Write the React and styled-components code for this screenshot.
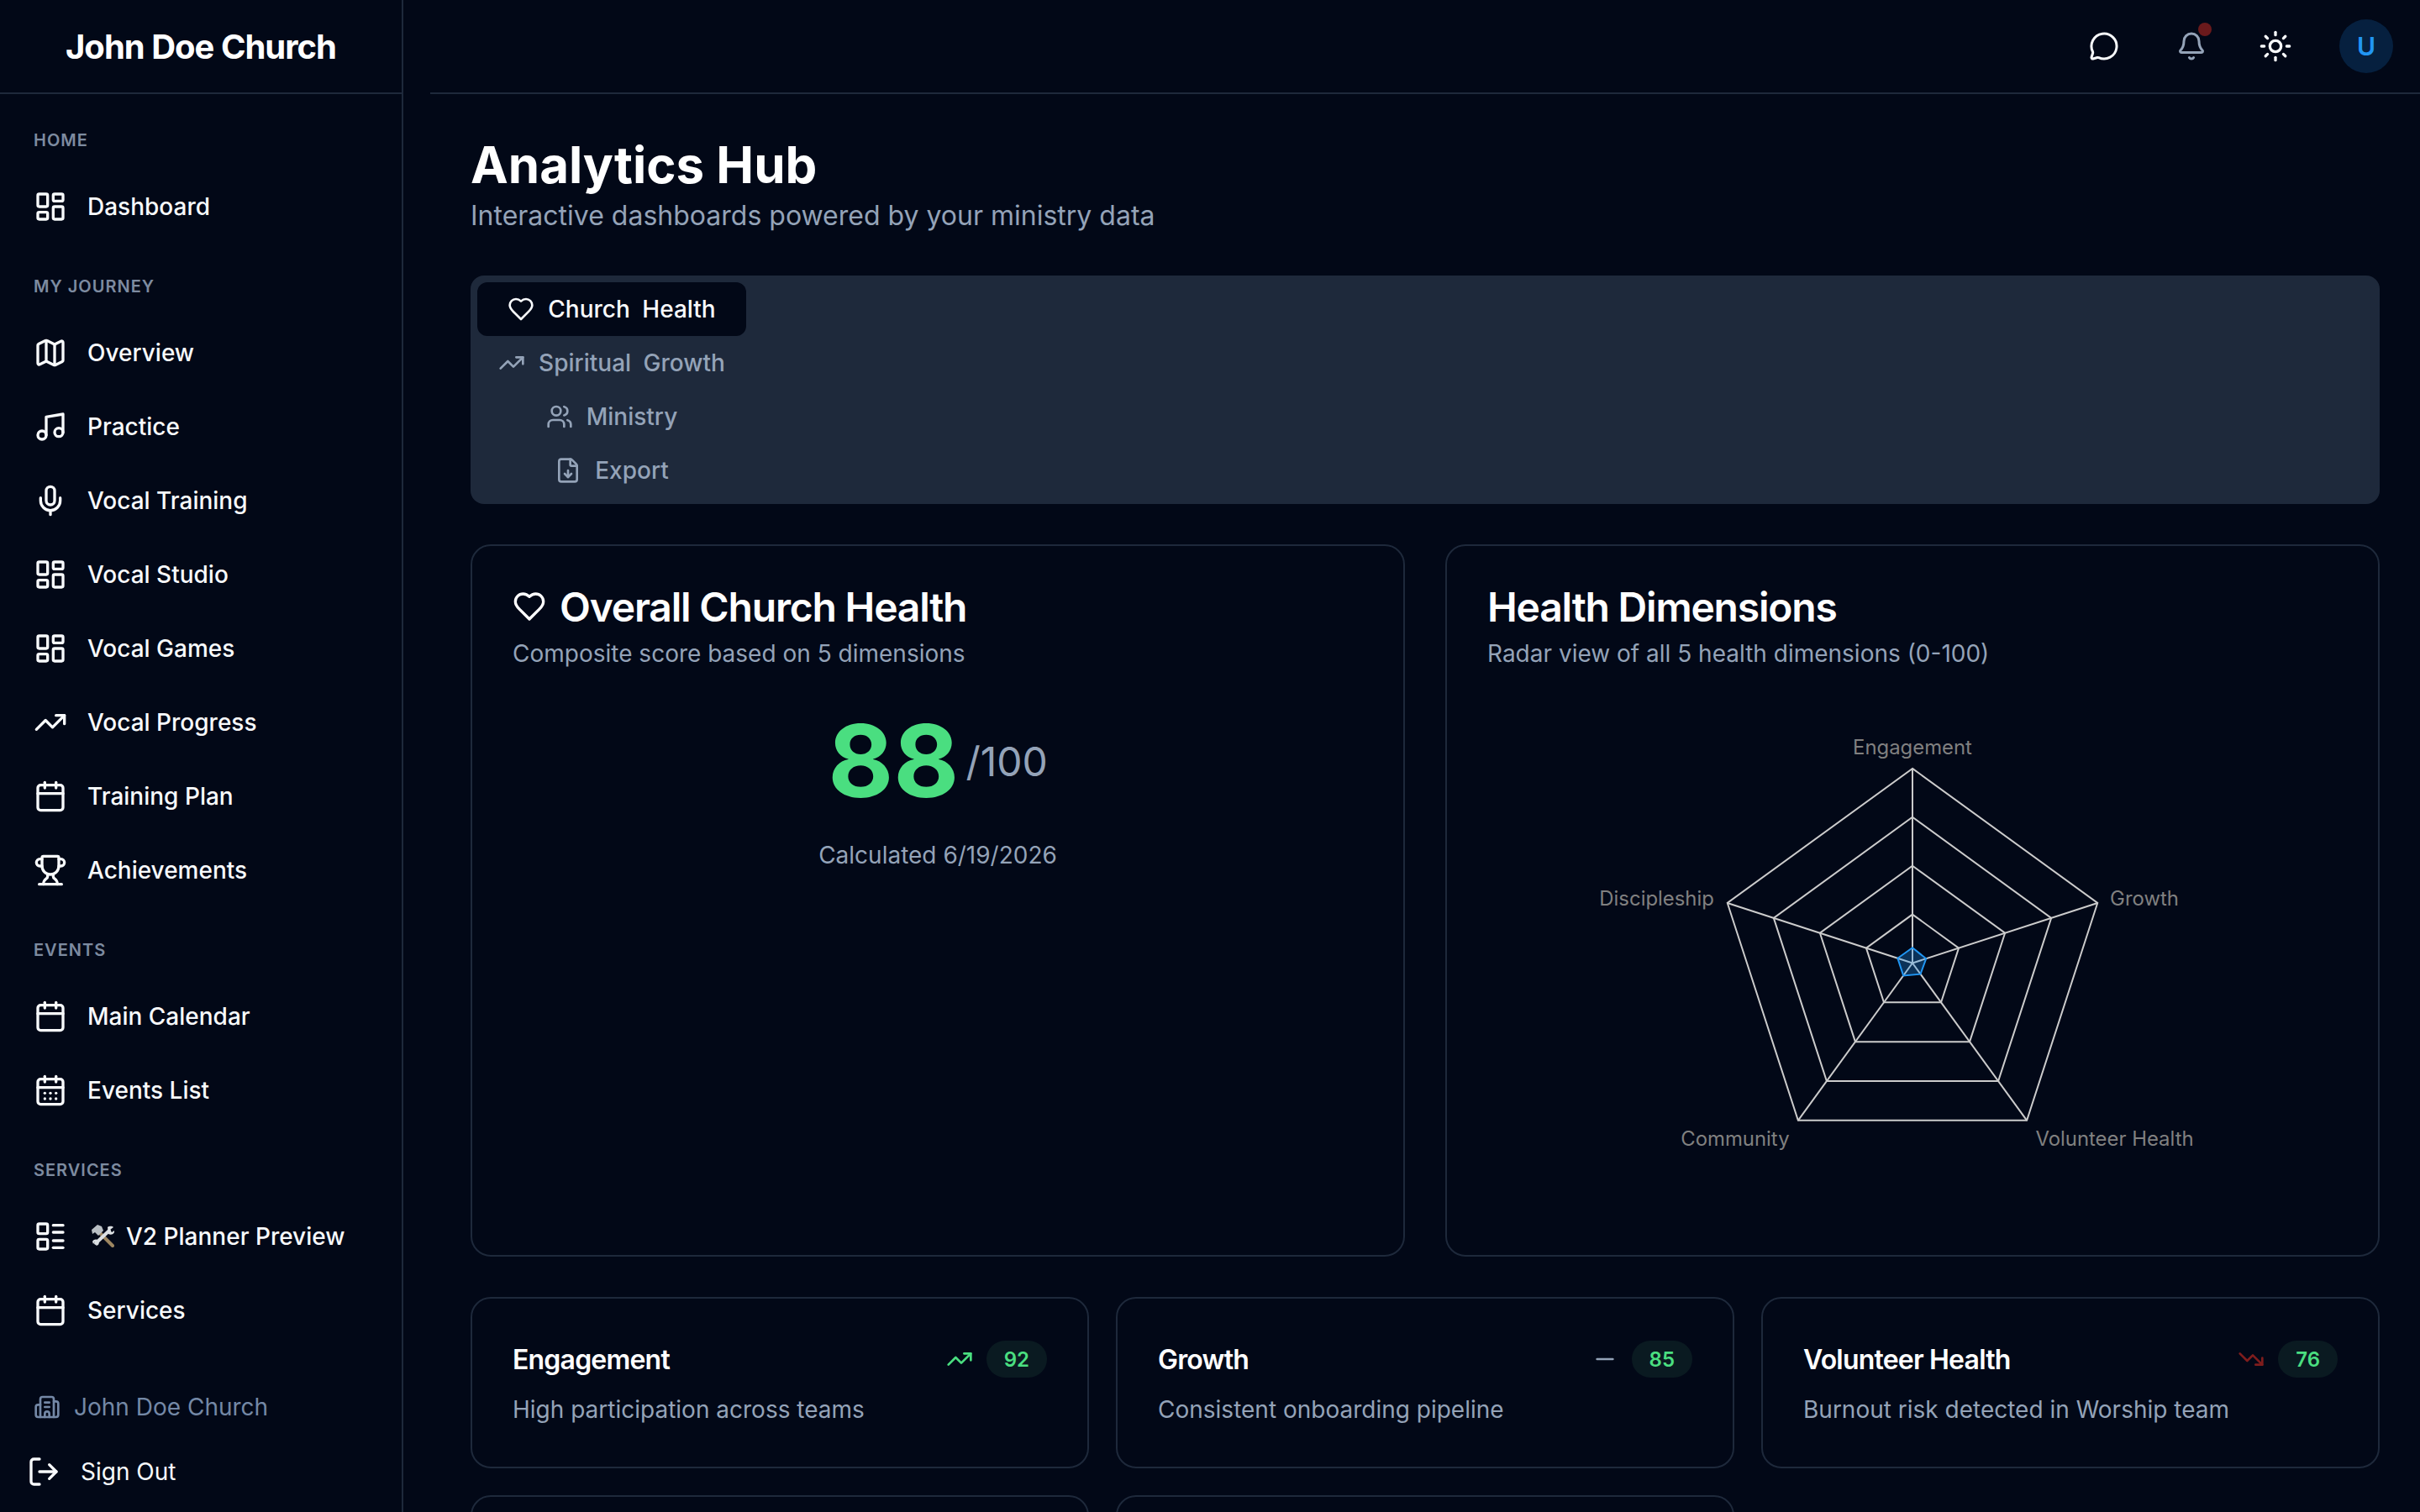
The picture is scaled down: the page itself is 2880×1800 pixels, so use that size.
import React from "react";
import styled, { createGlobalStyle } from "styled-components";
import {
  Bell,
  Building2,
  Calendar,
  CalendarDays,
  FileDown,
  LayoutDashboard,
  LayoutList,
  LogOut,
  Map,
  MessageCircle,
  Mic,
  Minus,
  Music,
  Sun,
  TrendingDown,
  TrendingUp,
  Trophy,
  Users,
} from "lucide-react";

const GlobalStyle = createGlobalStyle`
  html, body {
    margin: 0;
    height: 100%;
    overflow: hidden;
    background: #020817;
  }
  body {
    font-family: Inter, "Liberation Sans", sans-serif;
    color: #f8fafc;
  }
  * {
    box-sizing: border-box;
  }
`;

const Shell = styled.div`
  display: flex;
  width: 2880px;
  height: 1800px;
  overflow: hidden;
  background: #020817;
`;

const Sidebar = styled.aside`
  flex: 0 0 480px;
  height: 100%;
  display: flex;
  flex-direction: column;
  border-right: 2px solid #1e293b;
`;

const Brand = styled.div`
  height: 112px;
  flex: none;
  display: flex;
  align-items: center;
  justify-content: center;
  border-bottom: 2px solid #1e293b;
  font-size: 40px;
  font-weight: 700;
  letter-spacing: -1px;
  color: #ffffff;
`;

const Nav = styled.nav`
  display: flex;
  flex-direction: column;
  gap: 34px;
  padding-top: 38px;
`;

const NavSection = styled.div`
  display: flex;
  flex-direction: column;
`;

const SectionLabel = styled.div`
  height: 32px;
  margin-bottom: 20px;
  padding: 2px 0 0 40px;
  display: flex;
  align-items: center;
  font-size: 20px;
  font-weight: 600;
  letter-spacing: 1px;
  text-transform: uppercase;
  color: #7d8ba0;
`;

const NavItem = styled.a`
  height: 88px;
  padding-left: 40px;
  display: flex;
  align-items: center;
  gap: 24px;
  font-size: 28px;
  font-weight: 500;
  color: #f8fafc;
`;

const ToolEmoji = styled.svg`
  flex: none;
  width: 32px;
  height: 32px;
  margin-right: -10px;
`;

const SidebarFooter = styled.div`
  margin-top: auto;
  display: flex;
  flex-direction: column;
  padding-bottom: 12px;
`;

const ChurchName = styled.div`
  height: 60px;
  padding-left: 40px;
  display: flex;
  align-items: center;
  gap: 16px;
  font-size: 28px;
  color: #7488a6;
`;

const SignOut = styled.a`
  height: 72px;
  margin-top: 11px;
  padding-left: 32px;
  display: flex;
  align-items: center;
  gap: 24px;
  font-size: 28px;
  color: #f8fafc;
`;

const Main = styled.div`
  flex: 1;
  min-width: 0;
  margin-left: 32px;
  display: flex;
  flex-direction: column;
  overflow: hidden;
`;

const TopBar = styled.header`
  height: 112px;
  flex: none;
  padding-right: 32px;
  display: flex;
  align-items: center;
  justify-content: flex-end;
  gap: 32px;
  border-bottom: 2px solid #1e293b;
`;

const IconButton = styled.button`
  position: relative;
  width: ${({ $width }) => $width}px;
  height: 72px;
  padding: 0;
  display: flex;
  align-items: center;
  justify-content: center;
  border: 0;
  background: none;
  color: ${({ $color }) => $color};
`;

const NotificationDot = styled.span`
  position: absolute;
  top: 8px;
  left: 44px;
  width: 16px;
  height: 16px;
  border-radius: 50%;
  background: #6b1a1c;
`;

const Avatar = styled.div`
  width: 64px;
  height: 64px;
  margin-left: 12px;
  display: flex;
  align-items: center;
  justify-content: center;
  border-radius: 50%;
  background: #06203f;
  font-size: 30px;
  font-weight: 600;
  color: #2196f3;
`;

const Content = styled.main`
  flex: 1;
  padding: 48px 48px 0;
  display: flex;
  flex-direction: column;
  gap: 48px;
`;

const PageHeading = styled.div`
  margin-bottom: -2px;
`;

const PageTitle = styled.h1`
  margin: 0;
  font-size: 60px;
  line-height: 72px;
  font-weight: 700;
  color: #ffffff;
`;

const PageSubtitle = styled.p`
  margin: 0;
  font-size: 32px;
  line-height: 50px;
  color: #94a3b8;
`;

const TabList = styled.div`
  padding: 8px;
  display: flex;
  flex-direction: column;
  align-items: flex-start;
  border-radius: 16px;
  background: #1e293b;
`;

const Tab = styled.button`
  width: 320px;
  height: 64px;
  padding: 0;
  display: flex;
  align-items: center;
  justify-content: center;
  gap: 16px;
  border: 0;
  border-radius: 12px;
  background: ${({ $active }) => ($active ? "#020817" : "transparent")};
  font: 500 28px Inter, sans-serif;
  word-spacing: 7px;
  color: ${({ $active }) => ($active ? "#f8fafc" : "#94a3b8")};
`;

const CardGrid = styled.div`
  display: grid;
  grid-template-columns: 1fr 1fr;
  gap: 48px;
`;

const Card = styled.section`
  height: 848px;
  padding: 48px;
  display: flex;
  flex-direction: column;
  border: 2px solid #1e293b;
  border-radius: 24px;
`;

const CardTitle = styled.h2`
  margin: 0;
  height: 48px;
  display: flex;
  align-items: center;
  gap: 16px;
  font-size: 48px;
  font-weight: 600;
  letter-spacing: -1.2px;
  color: #ffffff;
`;

const CardDescription = styled.p`
  margin: 12px 0 48px;
  font-size: 28px;
  line-height: 40px;
  color: #94a3b8;
`;

const ScoreRow = styled.div`
  height: 120px;
  display: flex;
  align-items: center;
  justify-content: center;
  gap: 8px;
`;

const ScoreValue = styled.span`
  font-size: 120px;
  line-height: 120px;
  font-weight: 700;
  color: #4ade80;
`;

const ScoreMax = styled.span`
  font-size: 48px;
  color: #94a3b8;
`;

const Calculated = styled.p`
  margin: 32px 0 0;
  text-align: center;
  font-size: 28px;
  line-height: 40px;
  color: #94a3b8;
`;

const RadarSvg = styled.svg`
  display: block;
  width: 100%;
  height: 600px;
`;

const RadarLabel = styled.text`
  font-size: 24px;
  fill: #808080;
`;

const MetricGrid = styled.div`
  display: grid;
  grid-template-columns: repeat(3, 1fr);
  gap: 32px;
`;

const MetricCard = styled.article`
  height: 204px;
  padding: 48px;
  border: 2px solid #1e293b;
  border-radius: 24px;
`;

const MetricHead = styled.div`
  height: 48px;
  display: flex;
  align-items: center;
  justify-content: space-between;
`;

const MetricTitle = styled.h3`
  margin: 0;
  font-size: 32px;
  font-weight: 600;
  letter-spacing: -0.8px;
  color: #ffffff;
`;

const MetricScore = styled.div`
  display: flex;
  align-items: center;
  gap: 16px;
`;

const ScoreBadge = styled.span`
  height: 44px;
  padding: 0 21px;
  display: flex;
  align-items: center;
  border-radius: 22px;
  background: #0a1a21;
  font-size: 24px;
  font-weight: 600;
  color: #4ade80;
`;

const MetricText = styled.p`
  margin: 16px 0 0;
  font-size: 28px;
  line-height: 40px;
  color: #94a3b8;
`;

// the pointed heart from the older lucide set, the current package rounds the tip
const Heart = ({ size }) => (
  <svg width={size} height={size} viewBox="0 0 24 24" fill="none" stroke="currentColor" strokeWidth="2" strokeLinecap="round" strokeLinejoin="round">
    <path d="M19 14c1.49-1.46 3-3.21 3-5.5A5.5 5.5 0 0 0 16.5 3c-1.76 0-3 .5-4.5 2-1.5-1.5-2.74-2-4.5-2A5.5 5.5 0 0 0 2 8.5c0 2.3 1.5 4.05 3 5.5l7 7Z" />
  </svg>
);

const navSections = [
  { label: "Home", items: [{ icon: LayoutDashboard, text: "Dashboard" }] },
  {
    label: "My Journey",
    items: [
      { icon: Map, text: "Overview" },
      { icon: Music, text: "Practice" },
      { icon: Mic, text: "Vocal Training" },
      { icon: LayoutDashboard, text: "Vocal Studio" },
      { icon: LayoutDashboard, text: "Vocal Games" },
      { icon: TrendingUp, text: "Vocal Progress" },
      { icon: Calendar, text: "Training Plan" },
      { icon: Trophy, text: "Achievements" },
    ],
  },
  {
    label: "Events",
    items: [
      { icon: Calendar, text: "Main Calendar" },
      { icon: CalendarDays, text: "Events List" },
    ],
  },
  {
    label: "Services",
    items: [
      { icon: LayoutList, text: "V2 Planner Preview", tool: true },
      { icon: Calendar, text: "Services" },
    ],
  },
];

const tabs = [
  { icon: Heart, text: "Church Health", active: true },
  { icon: TrendingUp, text: "Spiritual Growth" },
  { icon: Users, text: "Ministry" },
  { icon: FileDown, text: "Export" },
];

const metrics = [
  { title: "Engagement", text: "High participation across teams", score: 92, icon: TrendingUp, color: "#4ade80" },
  { title: "Growth", text: "Consistent onboarding pipeline", score: 85, icon: Minus, color: "#94a3b8" },
  { title: "Volunteer Health", text: "Burnout risk detected in Worship team", score: 76, icon: TrendingDown, color: "#7f1d1d" },
];

const RADAR = { cx: 508, cy: 300.5, radius: 232.5 };
const radarAxes = [
  { label: "Engagement", value: 18.3, x: 508, y: 51, anchor: "middle" },
  { label: "Growth", value: 17.1, x: 744, y: 232, anchor: "start" },
  { label: "Volunteer Health", value: 16.3, x: 655, y: 519, anchor: "start" },
  { label: "Community", value: 18.5, x: 361, y: 519, anchor: "end" },
  { label: "Discipleship", value: 18.6, x: 271, y: 232, anchor: "end" },
];

const radarPoint = (index, radius) => {
  const angle = (index * 2 * Math.PI) / radarAxes.length - Math.PI / 2;
  return [RADAR.cx + radius * Math.cos(angle), RADAR.cy + radius * Math.sin(angle)];
};

const ringPoints = (radiusOf) =>
  radarAxes.map((axis, i) => radarPoint(i, radiusOf(axis)).join(",")).join(" ");

const RadarChart = () => (
  <RadarSvg viewBox="0 0 1016 600">
    {[0.25, 0.5, 0.75, 1].map((step) => (
      <polygon key={step} points={ringPoints(() => RADAR.radius * step)} fill="none" stroke="#cccccc" strokeWidth="2" />
    ))}
    {radarAxes.map((axis, i) => {
      const [x, y] = radarPoint(i, RADAR.radius);
      return <line key={axis.label} x1={RADAR.cx} y1={RADAR.cy} x2={x} y2={y} stroke="#cccccc" strokeWidth="2" />;
    })}
    <polygon points={ringPoints((axis) => axis.value)} fill="#2196f3" fillOpacity="0.3" stroke="#2196f3" strokeWidth="2" />
    {radarAxes.map((axis) => (
      <RadarLabel key={axis.label} x={axis.x} y={axis.y} textAnchor={axis.anchor}>
        {axis.label}
      </RadarLabel>
    ))}
  </RadarSvg>
);

// the emoji in the nav label, drawn because no colour emoji font is installed
const HammerAndWrench = () => (
  <ToolEmoji viewBox="0 0 32 32">
    <path d="M13 10 L30 27" stroke="#9c8560" strokeWidth="4" strokeLinecap="round" fill="none" />
    <path d="M5 8 L12 2 L17 4 L19 9 L13 15 L9 11 L6 13 Z" fill="#b9bfc4" />
    <path d="M10 24 L26 9" stroke="#dde1e4" strokeWidth="4" strokeLinecap="round" fill="none" />
    <path d="M24 5 C27 3 30 4 31 5 L27 8 L29 11 L32 9 C33 12 29 15 25 13 Z" fill="#dde1e4" />
    <path d="M6 22 C8 19 11 19 13 21 C15 24 13 27 10 27 L12 24 L9 22 L7 25 Z" fill="#dde1e4" />
  </ToolEmoji>
);

const App = () => (
  <Shell>
    <GlobalStyle />
    <Sidebar>
      <Brand>John Doe Church</Brand>
      <Nav>
        {navSections.map((section) => (
          <NavSection key={section.label}>
            <SectionLabel>{section.label}</SectionLabel>
            {section.items.map(({ icon: Icon, text, tool }) => (
              <NavItem key={text}>
                <Icon size={40} />
                {tool && <HammerAndWrench />}
                <span>{text}</span>
              </NavItem>
            ))}
          </NavSection>
        ))}
      </Nav>
      <SidebarFooter>
        <ChurchName>
          <Building2 size={32} />
          John Doe Church
        </ChurchName>
        <SignOut>
          <LogOut size={40} />
          Sign Out
        </SignOut>
      </SidebarFooter>
    </Sidebar>
    <Main>
      <TopBar>
        <IconButton $width={72} $color="#f8fafc">
          <MessageCircle size={36} />
        </IconButton>
        <IconButton $width={72} $color="#94a3b8">
          <Bell size={36} />
          <NotificationDot />
        </IconButton>
        <IconButton $width={64} $color="#f8fafc">
          <Sun size={40} />
        </IconButton>
        <Avatar>U</Avatar>
      </TopBar>
      <Content>
        <PageHeading>
          <PageTitle>Analytics Hub</PageTitle>
          <PageSubtitle>Interactive dashboards powered by your ministry data</PageSubtitle>
        </PageHeading>
        <TabList>
          {tabs.map(({ icon: Icon, text, active }) => (
            <Tab key={text} $active={active}>
              <Icon size={32} />
              {text}
            </Tab>
          ))}
        </TabList>
        <CardGrid>
          <Card>
            <CardTitle>
              <Heart size={40} />
              Overall Church Health
            </CardTitle>
            <CardDescription>Composite score based on 5 dimensions</CardDescription>
            <ScoreRow>
              <ScoreValue>88</ScoreValue>
              <ScoreMax>/100</ScoreMax>
            </ScoreRow>
            <Calculated>Calculated 6/19/2026</Calculated>
          </Card>
          <Card>
            <CardTitle>Health Dimensions</CardTitle>
            <CardDescription>Radar view of all 5 health dimensions (0-100)</CardDescription>
            <RadarChart />
          </Card>
        </CardGrid>
        <MetricGrid>
          {metrics.map(({ title, text, score, icon: Icon, color }) => (
            <MetricCard key={title}>
              <MetricHead>
                <MetricTitle>{title}</MetricTitle>
                <MetricScore>
                  <Icon size={32} color={color} />
                  <ScoreBadge>{score}</ScoreBadge>
                </MetricScore>
              </MetricHead>
              <MetricText>{text}</MetricText>
            </MetricCard>
          ))}
          <MetricCard />
          <MetricCard />
        </MetricGrid>
      </Content>
    </Main>
  </Shell>
);

export default App;
